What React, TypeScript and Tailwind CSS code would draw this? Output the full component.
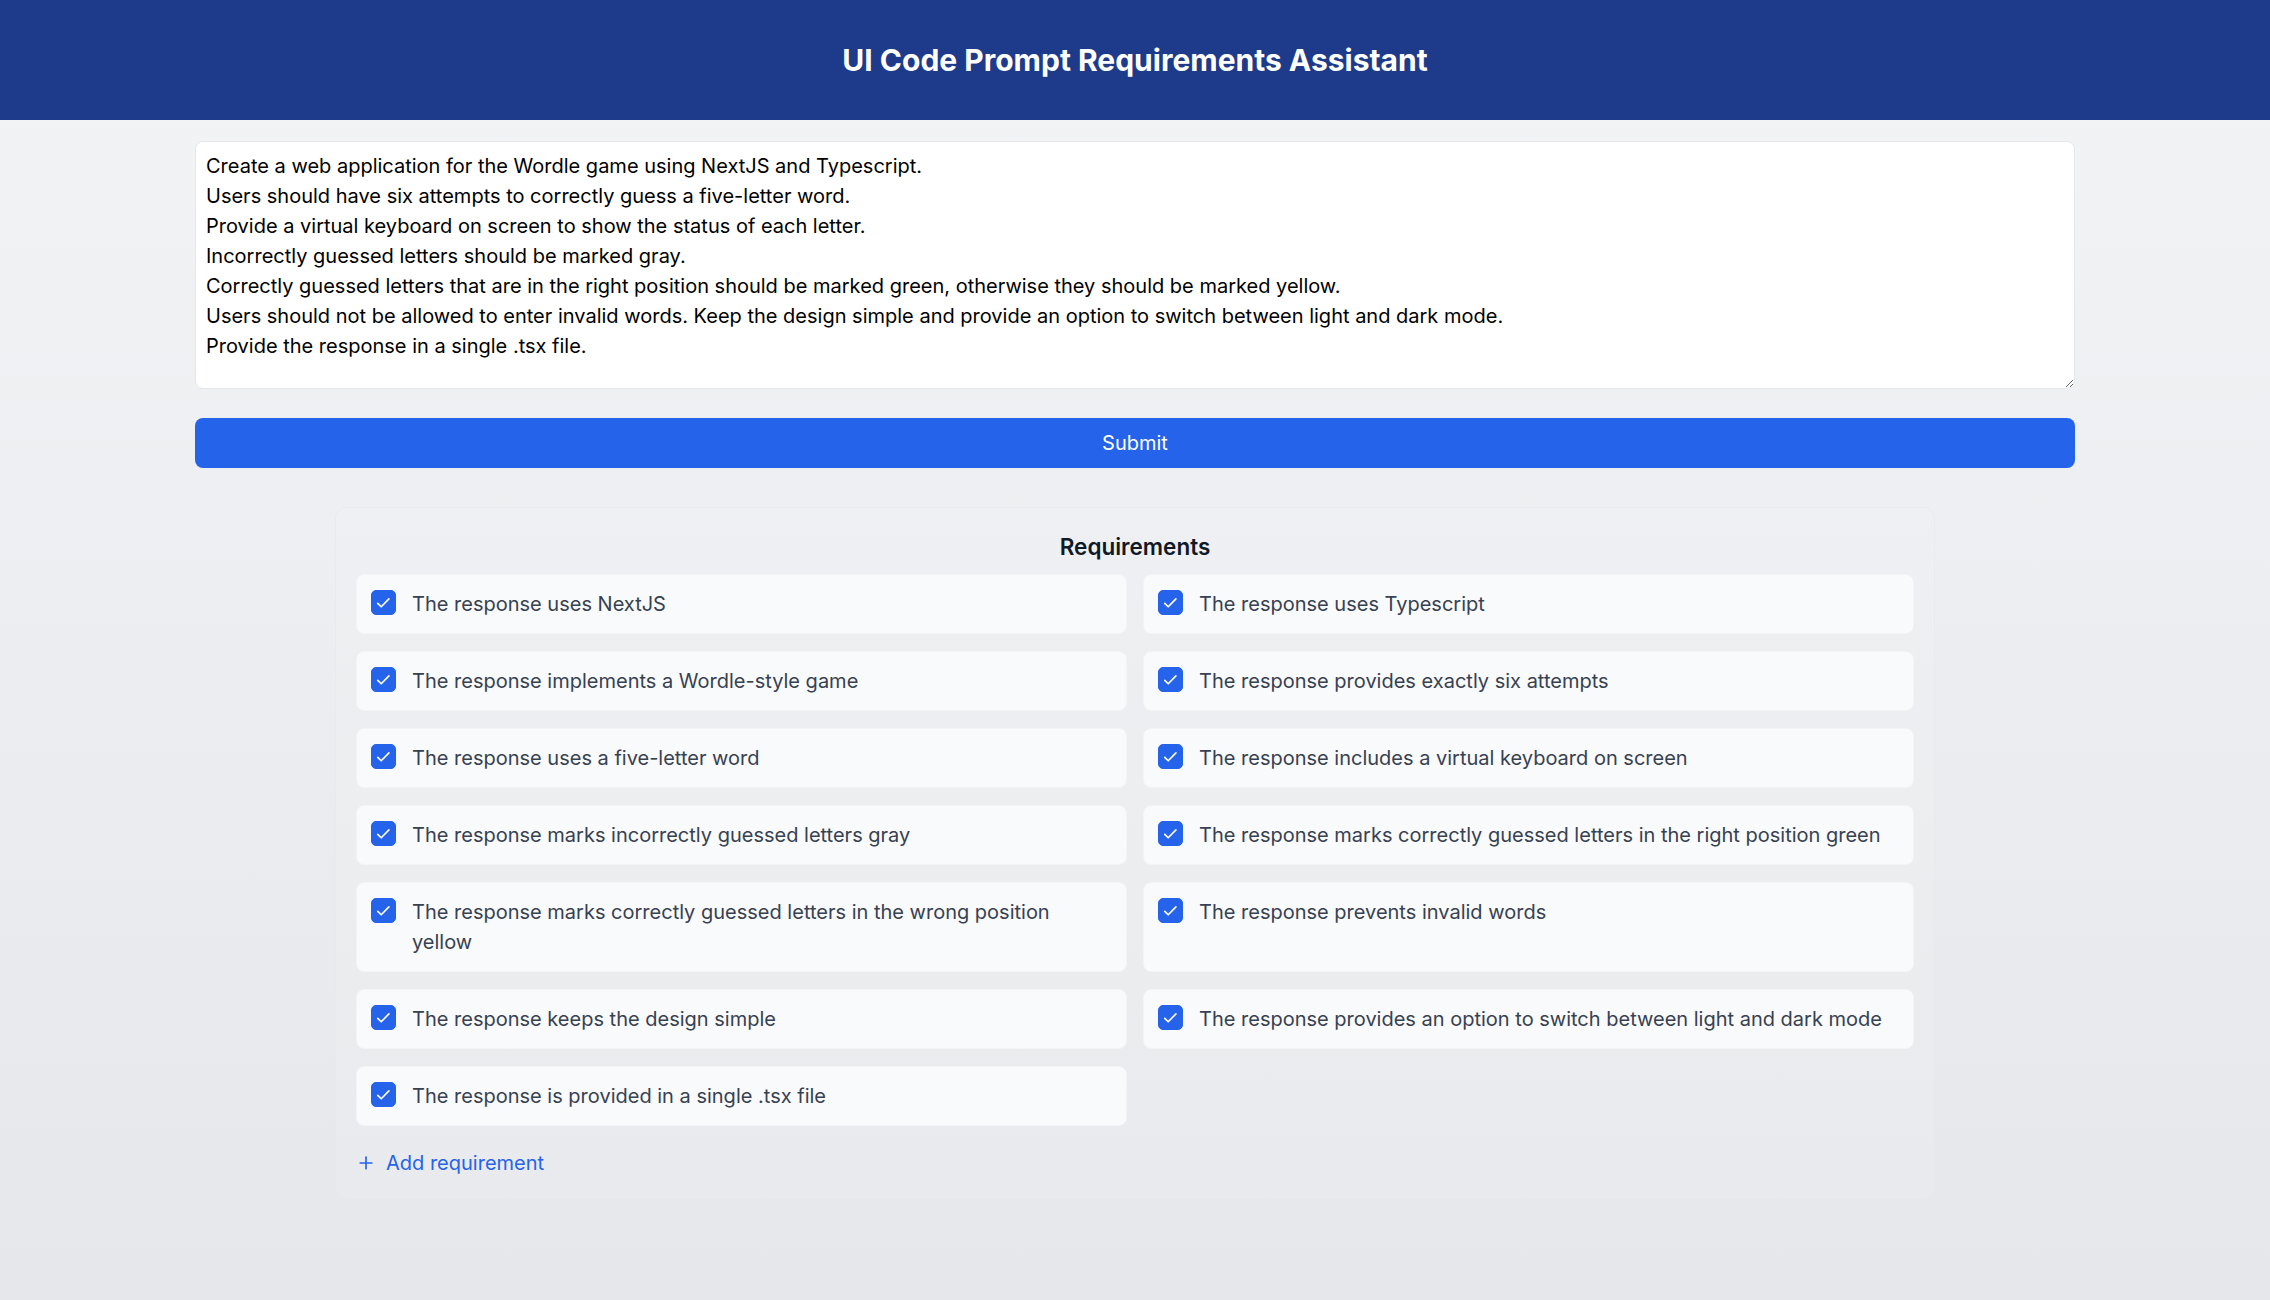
import { useState } from "react";
import { Plus } from "lucide-react";

const PROMPT = `Create a web application for the Wordle game using NextJS and Typescript.
Users should have six attempts to correctly guess a five-letter word.
Provide a virtual keyboard on screen to show the status of each letter.
Incorrectly guessed letters should be marked gray.
Correctly guessed letters that are in the right position should be marked green, otherwise they should be marked yellow.
Users should not be allowed to enter invalid words. Keep the design simple and provide an option to switch between light and dark mode.
Provide the response in a single .tsx file.`;

const INITIAL = [
  "The response uses NextJS",
  "The response uses Typescript",
  "The response implements a Wordle-style game",
  "The response provides exactly six attempts",
  "The response uses a five-letter word",
  "The response includes a virtual keyboard on screen",
  "The response marks incorrectly guessed letters gray",
  "The response marks correctly guessed letters in the right position green",
  "The response marks correctly guessed letters in the wrong position yellow",
  "The response prevents invalid words",
  "The response keeps the design simple",
  "The response provides an option to switch between light and dark mode",
  "The response is provided in a single .tsx file",
];

type Requirement = { text: string; checked: boolean };

export default function App() {
  const [prompt, setPrompt] = useState(PROMPT);
  const [reqs, setReqs] = useState<Requirement[]>(
    INITIAL.map((text) => ({ text, checked: true }))
  );

  const toggle = (i: number) =>
    setReqs((r) => r.map((x, j) => (j === i ? { ...x, checked: !x.checked } : x)));

  return (
    <div className="min-h-screen bg-gradient-to-b from-[#f3f4f6] to-[#e5e7eb] font-['Inter',sans-serif]">
      {/* HEADER */}
      <header className="h-[120px] bg-[#1e3a8a] flex items-center justify-center">
        <h1 className="text-[30px] leading-[40px] font-bold text-white">
          UI Code Prompt Requirements Assistant
        </h1>
      </header>

      <main className="mx-auto w-full max-w-[1920px] px-5 pt-[21px] pb-10">
        {/* PROMPT */}
        <textarea
          value={prompt}
          onChange={(e) => setPrompt(e.target.value)}
          className="block w-full h-[248px] px-[10px] pt-[9px] pb-[10px] text-[20px] leading-[30px] text-black bg-white border border-[#e5e7eb] rounded-lg outline-none"
        />

        <button className="mt-[29px] w-full h-[50px] bg-[#2563eb] text-white text-[20px] rounded-lg">
          Submit
        </button>

        {/* REQUIREMENTS */}
        <section className="mt-[39px] mx-auto max-w-[1600px] px-5 pt-[21px] pb-5 rounded-xl border border-[#e5e7eb]/60 bg-white/10">
          <h2 className="text-center text-[22.5px] leading-[35px] font-semibold text-[#111827] mb-[10px]">
            Requirements
          </h2>

          <div className="grid grid-cols-2 gap-x-4 gap-y-[17px]">
            {reqs.map((r, i) => (
              <label
                key={i}
                className="flex items-start gap-4 p-[14px] bg-[#f9fafb] border border-[#f3f4f6] rounded-lg cursor-pointer"
              >
                <span className="relative shrink-0 w-[25px] h-[25px] mt-px">
                  <input
                    type="checkbox"
                    checked={r.checked}
                    onChange={() => toggle(i)}
                    className="appearance-none block w-[25px] h-[25px] rounded-[5px] border border-[#d1d5db] bg-white checked:bg-[#2563eb] checked:border-[#2563eb] cursor-pointer"
                  />
                  {r.checked && (
                    <svg
                      viewBox="0 0 24 24"
                      className="absolute inset-0 w-[25px] h-[25px] pointer-events-none"
                      fill="none"
                      stroke="white"
                      strokeWidth="1.6"
                      strokeLinecap="round"
                      strokeLinejoin="round"
                    >
                      <path d="M6.5 12.8l3.3 3.3 7.4-7.6" />
                    </svg>
                  )}
                </span>
                <span className="text-[20px] leading-[30px] text-[#374151]">{r.text}</span>
              </label>
            ))}
          </div>

          <button
            onClick={() => setReqs((r) => [...r, { text: "New requirement", checked: false }])}
            className="mt-[22px] flex items-center gap-[10px] text-[20px] leading-[30px] text-[#2563eb]"
          >
            <Plus size={20} />
            Add requirement
          </button>
        </section>
      </main>
    </div>
  );
}
